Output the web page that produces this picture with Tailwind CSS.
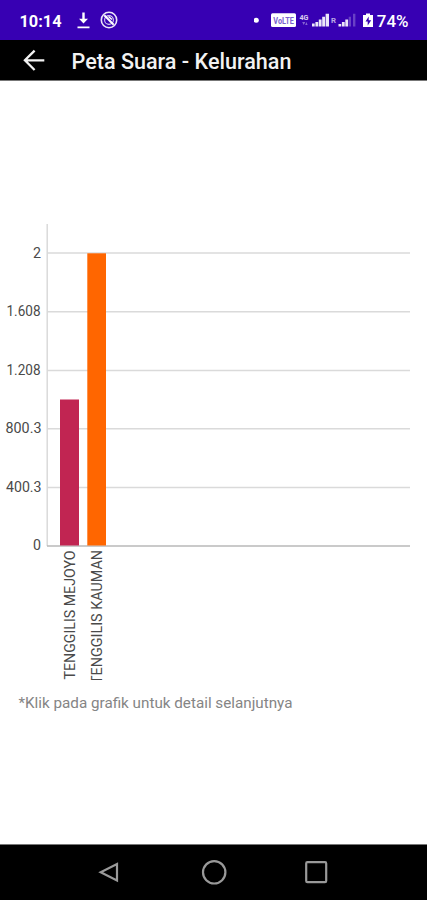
<!DOCTYPE html>
<html lang="id">
<head>
    <meta charset="UTF-8">
    <meta name="viewport" content="width=device-width, initial-scale=1.0">
    <title>Peta Suara - Kelurahan</title>
    <script src="https://cdn.jsdelivr.net/npm/@tailwindcss/browser@4"></script>
</head>
<body class="bg-white font-[Roboto,sans-serif]">
<div class="flex h-[900px] w-[427px] flex-col overflow-hidden">

    <!-- Status bar -->
    <div class="flex h-10 shrink-0 items-center justify-between bg-[#3700b3] pr-[18px] pl-[20px] text-white">
        <div class="flex items-center">
            <svg class="h-5 w-[43px]" viewBox="0 0 43 20" fill="currentColor">
                <text x="-0.5" y="16.5" textLength="42" lengthAdjust="spacingAndGlyphs" class="text-[16.5px] font-bold">10:14</text>
            </svg>
            <svg class="ml-[14px] h-[17px] w-[13px]" viewBox="0 0 13 17" fill="currentColor">
                <path d="M5.3 0.5h2.4v6.2h3.3L6.5 11.6 2 6.7h3.3zM0.5 14.4h12v1.8h-12z"/>
            </svg>
            <svg class="ml-[10px] h-[18px] w-[18px]" viewBox="0 0 18 18" fill="none" stroke="currentColor">
                <circle cx="9" cy="9" r="7.7" stroke-width="1.6" opacity=".9"/>
                <circle cx="9" cy="9" r="4.4" stroke-width="1.1" opacity=".8"/>
                <path d="M4.3 4.3l9.4 9.4" stroke-width="2"/>
                <path d="M8.5 5.5l3.5 3" stroke-width="1.6"/>
            </svg>
        </div>
        <svg class="h-5 w-[155px]" viewBox="254 10 155 20" fill="currentColor">
            <circle cx="256.3" cy="20.2" r="2.5"/>
            <rect x="271" y="13.3" width="25" height="13.7" rx="1.5"/>
            <text x="273.3" y="23.5" textLength="20.5" lengthAdjust="spacingAndGlyphs" fill="#7a60cf" class="text-[9px] font-bold">VoLTE</text>
            <g opacity=".8">
                <text x="299.5" y="20.3" textLength="9" lengthAdjust="spacingAndGlyphs" class="text-[7.5px] font-bold">4G</text>
                <path d="M302.2 22l1.5 3 1.5-3zM305.2 25l1.2-3 1.2 3z" opacity=".5"/>
            </g>
            <path d="M312 23.5h2.7v3H312zM315.4 22h2.8v4.5h-2.8zM318.8 19.5h2.8v7h-2.8zM322.2 16.7h2.8v9.8h-2.8zM325.6 13.7h3.4v12.8h-3.4z" opacity=".9"/>
            <text x="331" y="22.7" textLength="5" lengthAdjust="spacingAndGlyphs" opacity=".65" class="text-[6.5px] font-bold">R</text>
            <path d="M338.5 24h2.7v2.5h-2.7zM341.9 22h2.8v4.5h-2.8zM345.3 19.5h2.8v7h-2.8z" opacity=".9"/>
            <path d="M348.7 16.7h2.3v9.8h-2.3zM353 13.7h2.4v12.8H353z" opacity=".25"/>
            <path d="M363 15h3v-1.5h4V15h3v12h-10z"/>
            <path d="M368.7 16.5l-3.2 5h2.2v4l3.5-5.3h-2.5z" fill="#3700b3"/>
            <text x="376.8" y="26.7" textLength="31.7" lengthAdjust="spacingAndGlyphs" class="text-[16.5px] font-medium">74%</text>
        </svg>
    </div>

    <!-- App bar -->
    <header class="flex h-[41px] shrink-0 items-center border-b border-[#777] bg-black pl-[23px] text-[#f2f2f2]">
        <svg class="h-[22px] w-[22px]" viewBox="0 0 22 22" fill="none" stroke="currentColor" stroke-width="2.3">
            <path d="M21.3 11.3H2M11.6 1.6L1.9 11.3l9.7 9.7"/>
        </svg>
        <h1 class="ml-[26px]">
            <svg class="block h-[30px] w-[224px]" viewBox="0 0 224 30" fill="currentColor">
                <text x="0.5" y="24" textLength="220" lengthAdjust="spacingAndGlyphs" class="text-[21.5px] font-medium">Peta Suara - Kelurahan</text>
            </svg>
        </h1>
    </header>

    <main class="flex-1 bg-white">
        <!-- Bar chart -->
        <svg class="mt-[134px] block h-[470px] w-[427px]" viewBox="0 215 427 470">
            <g fill="none" stroke="#dadada" stroke-width="1.5">
                <path d="M47 253h363M47 311.8h363M47 370.4h363M47 428.8h363M47 487.6h363"/>
                <path d="M47.2 224v322"/>
                <path d="M47 546h363" stroke="#b8b8b8"/>
            </g>
            <rect x="60" y="399.5" width="19" height="146" fill="#c12552"/>
            <rect x="87.3" y="253.3" width="18.7" height="292.2" fill="#ff6600"/>
            <g fill="#4a4a4a" class="text-[14.5px]">
                <text x="33" y="257.7" textLength="8" lengthAdjust="spacingAndGlyphs">2</text>
                <text x="6.5" y="316.4" textLength="34" lengthAdjust="spacingAndGlyphs">1.608</text>
                <text x="6.5" y="374.7" textLength="34" lengthAdjust="spacingAndGlyphs">1.208</text>
                <text x="5.5" y="433.3" textLength="36" lengthAdjust="spacingAndGlyphs">800.3</text>
                <text x="6" y="491.8" textLength="35.5" lengthAdjust="spacingAndGlyphs">400.3</text>
                <text x="33" y="550.4" textLength="8" lengthAdjust="spacingAndGlyphs">0</text>
            </g>
            <!-- Category labels, the long one is cut at the chart's lower edge -->
            <svg x="0" y="215" width="427" height="465" viewBox="0 215 427 465">
                <g fill="#4a4a4a" class="text-[14px]">
                    <text transform="translate(74.5 679.5) rotate(-90)" textLength="129" lengthAdjust="spacingAndGlyphs">TENGGILIS MEJOYO</text>
                    <text transform="translate(101.5 684) rotate(-90)" textLength="134" lengthAdjust="spacingAndGlyphs">TENGGILIS KAUMAN</text>
                </g>
            </svg>
        </svg>
        <p class="pl-[18px]">
            <svg class="block h-[30px] w-[280px]" viewBox="0 0 280 30" fill="#858585">
                <text x="0.5" y="23.3" textLength="274" lengthAdjust="spacingAndGlyphs" class="text-[15.5px]">*Klik pada grafik untuk detail selanjutnya</text>
            </svg>
        </p>
    </main>

    <!-- Navigation bar -->
    <nav class="h-[56px] shrink-0 border-t border-[#777] bg-black">
        <svg class="block h-[55px] w-[427px]" viewBox="0 845 427 55" fill="none" stroke="#999" stroke-width="2.2">
            <path d="M117 864v16.5l-16.3-8.2z"/>
            <circle cx="214.2" cy="872.3" r="11.2"/>
            <rect x="306.2" y="862.2" width="20" height="20" rx="1.2"/>
        </svg>
    </nav>
</div>
</body>
</html>
